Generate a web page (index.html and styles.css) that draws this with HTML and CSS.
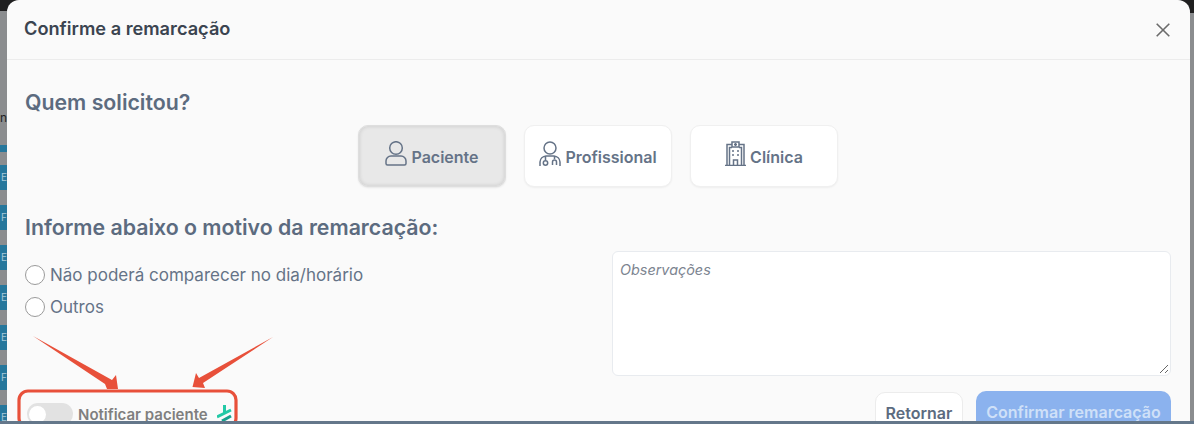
FILE: index.html
```html
<!DOCTYPE html>
<html lang="pt-BR">
<head>
<meta charset="utf-8">
<title>Confirme a remarcação</title>
<link rel="stylesheet" href="styles.css">
</head>
<body>
<div class="screen">
  <div class="stage">
    <div class="backdrop-left">
      <span class="letter">n</span>
      <div class="stripe-thin"></div>
      <div class="stripe">E</div>
      <div class="stripe">F</div>
      <div class="stripe">E</div>
      <div class="stripe">E</div>
      <div class="stripe">E</div>
      <div class="stripe">F</div>
      <div class="stripe">E</div>
    </div>
    <section class="modal">
      <header class="modal-head">
        <h1 class="modal-title">Confirme a remarcação</h1>
        <svg class="close" viewBox="0 0 14 14" width="14" height="14"><path d="M.7.7 13.300 13.300M13.300.7.7 13.300"/></svg>
      </header>
      <div class="modal-body">
        <h2 class="section-title">Quem solicitou?</h2>
        <div class="choices">
          <button class="choice choice-active">
            <svg class="icon" viewBox="0 0 22 25" width="22" height="25"><circle cx="11" cy="7" r="6.300"/><path d="M6 15h10a5 5 0 0 1 5 5v2.500a1.500 1.500 0 0 1-1.500 1.500h-17A1.500 1.500 0 0 1 1 22.500V20a5 5 0 0 1 5-5z"/></svg>
            <span class="choice-label">Paciente</span>
          </button>
          <button class="choice">
            <svg class="icon" viewBox="0 0 22 25" width="22" height="25"><circle cx="11" cy="7" r="6"/><path d="M1 25v-4a6.500 6.500 0 0 1 6-6h8a6.500 6.500 0 0 1 6 6v4M6.500 15.500v4M15.500 15.500v2.500M13.500 24v-3a2 2 0 0 1 4 0v3"/><circle cx="6.500" cy="22" r="2.200"/></svg>
            <span class="choice-label">Profissional</span>
          </button>
          <button class="choice">
            <svg class="icon" viewBox="0 0 21 25" width="21" height="25"><path d="M2 24.500V3.500h5M14 3.500h5v21M0 24.500h21M7 6V1h7v5zM10.500 2v3M9 3.500h3M4.500 24V6.500H7M14 6.500h2.500V24M8.500 24v-5h4v5M8 9v2M13 9v2M8 13v2M13 13v2"/></svg>
            <span class="choice-label">Clínica</span>
          </button>
        </div>
        <h2 class="section-title reason-title">Informe abaixo o motivo da remarcação:</h2>
        <div class="form-row">
          <div class="reasons">
            <label class="radio-row"><span class="radio"></span>Não poderá comparecer no dia/horário</label>
            <label class="radio-row"><span class="radio"></span>Outros</label>
          </div>
          <div class="notes">
            <span class="placeholder">Observações</span>
            <svg class="grip" viewBox="0 0 10 10" width="10" height="10"><path d="M1 9 9 1M6 9 9 6"/></svg>
          </div>
        </div>
        <div class="modal-foot">
          <div class="notify">
            <span class="switch"><span class="knob"></span></span>
            <span class="notify-label">Notificar paciente</span>
            <svg class="brand" viewBox="0 0 15 16" width="15" height="16"><path class="brand-a" d="M7.500 0v7.500M0 12 14 5"/><path class="brand-b" d="M5 16 14 11"/></svg>
          </div>
          <div class="actions">
            <button class="btn-back">Retornar</button>
            <button class="btn-confirm">Confirmar remarcação</button>
          </div>
        </div>
      </div>
    </section>
    <div class="backdrop-right"></div>
    <svg class="annotation" viewBox="0 0 1194 424" width="1194" height="424">
      <path d="M33 336 112 380 116 375 118 389 107 389 105 384z" class="arrow"/>
      <path d="M273 337 199 378 196 373 192.500 387 205 388 203 383z" class="arrow"/>
      <rect x="19" y="391" width="217" height="36" rx="9" class="callout"/>
    </svg>
  </div>
  <div class="bottom-strip"></div>
</div>
</body>
</html>
```
FILE: styles.css
```css
* { box-sizing: border-box; }
html, body { margin: 0; padding: 0; }
body { width: 1194px; height: 424px; overflow: hidden; background: #222; font-family: Inter, "Liberation Sans", sans-serif; }

.screen { width: 1194px; height: 424px; display: flex; flex-direction: column; overflow: hidden; }
.stage { position: relative; flex: 1; min-height: 0; display: flex; background: #1f1f20; overflow: hidden; }
.bottom-strip { height: 3px; background: #64778a; }

.backdrop-left { width: 7px; margin-top: 11px; background: #8b8d8f; display: flex; flex-direction: column; overflow: hidden; flex: none; }
.letter { height: 134px; flex: none; padding-top: 97px; font-size: 12px; line-height: 20px; color: #222; }
.stripe-thin { height: 7px; margin-bottom: 13px; background: #26779c; flex: none; }
.stripe { height: 25px; margin-bottom: 15px; background: #26779c; color: #a8c9d8; font-size: 10px; line-height: 25px; flex: none; text-align: right; }

.backdrop-right { width: 4px; margin-top: 13px; background: #8b8d8f; flex: none; }

.modal { flex: 1; min-width: 0; background: #fafafa; border-radius: 12px 12px 0 0; display: flex; flex-direction: column; overflow: hidden; }
.modal-head { height: 60px; flex: none; padding: 0 20px 0 17px; display: flex; justify-content: space-between; align-items: flex-start; border-bottom: 1px solid #ececec; }
.modal-title { margin: 17px 0 0; font-size: 18.200px; line-height: 22px; font-weight: 600; color: #3b4450; }
.close { fill: none; stroke: #6b6b6b; stroke-width: 1.600; margin-top: 23px; }

.modal-body { flex: 1; padding: 0 19px 0 18px; display: flex; flex-direction: column; min-height: 0; }
.section-title { margin: 0; font-size: 21.300px; font-weight: 600; line-height: 26px; color: #5c6b7f; }
.modal-body > .section-title:first-child { margin-top: 29px; }

.choices { display: flex; justify-content: center; gap: 18px; margin-top: 10px; }
.choice { width: 148px; height: 62px; display: flex; align-items: center; justify-content: center; gap: 4px; padding: 0; background: #fff; border: 1px solid #f0f0f0; border-radius: 10px; box-shadow: 0 1px 2px rgba(0,0,0,.05); font-family: inherit; font-size: 16px; font-weight: 600; color: #657387; }
.choice-active { background: #e8e8e8; border: 1px solid #dedede; box-shadow: inset 0 0 4px rgba(0,0,0,.14), 0 1px 2px rgba(0,0,0,.08); }
.choice-label { margin-top: 2px; }
.icon { fill: none; stroke: #657387; stroke-width: 1.500; flex: none; margin-top: -6px; }

.reason-title { margin-top: 27px; }

.form-row { display: flex; justify-content: space-between; margin-top: 11px; }
.reasons { display: flex; flex-direction: column; padding-top: 8px; }
.radio-row { display: flex; align-items: center; gap: 5px; height: 32px; font-size: 17px; color: #657387; }
.radio { width: 20px; height: 20px; background: #fff; border: 1.500px solid #9a9a9a; border-radius: 50%; flex: none; }

.notes { position: relative; width: 559px; height: 125px; background: #fff; border: 1px solid #e8ebef; border-radius: 6px; padding: 7px; }
.placeholder { font-size: 14.400px; font-style: italic; color: #7c8490; }
.grip { position: absolute; right: 1px; bottom: 1px; fill: none; stroke: #666; stroke-width: 1; }

.modal-foot { display: flex; justify-content: space-between; align-items: flex-start; margin-top: 15px; }
.notify { display: flex; align-items: center; gap: 5px; margin-top: 12px; margin-left: 2px; }
.switch { width: 46px; height: 22px; background: #e2e2e2; border-radius: 11px; display: flex; align-items: center; padding: 2px; }
.knob { width: 17px; height: 17px; background: #fff; border-radius: 50%; }
.notify-label { font-size: 15px; font-weight: 600; color: #7f7f7f; }
.brand { flex: none; margin-left: 4px; margin-top: -2px; fill: none; stroke-width: 3; }
.brand-a { stroke: #22c9a6; }
.brand-b { stroke: #16a08e; }

.actions { display: flex; gap: 13px; }
.btn-back { width: 88px; height: 42px; margin-top: 1px; background: #fff; border: 1px solid #ececec; border-radius: 10px; padding: 0; font-family: inherit; font-size: 16px; font-weight: 600; color: #5c6b7f; }
.btn-confirm { width: 195px; height: 42px; background: #8bb2ee; border: 0; border-radius: 10px; padding: 0; font-family: inherit; font-size: 16px; font-weight: 600; color: #cfe0f8; }

.annotation { position: absolute; left: 0; top: 0; pointer-events: none; }
.arrow { fill: #e8503a; }
.callout { fill: none; stroke: #e8503a; stroke-width: 3.200; }
```
